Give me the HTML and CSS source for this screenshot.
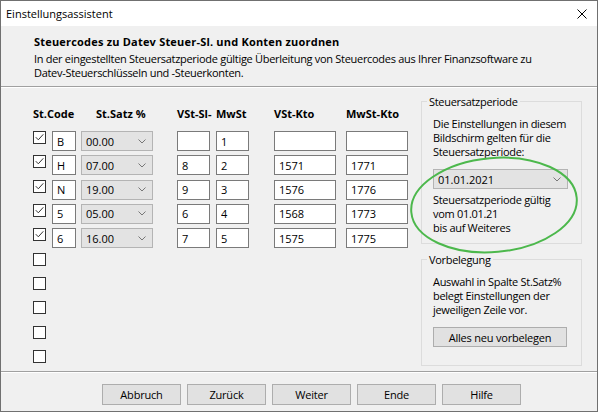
FILE: index.html
```html
<!DOCTYPE html>
<html lang="de">
<head>
<meta charset="utf-8">
<title>Einstellungsassistent</title>
<link rel="stylesheet" href="styles.css">
</head>
<body>
<div class="window">
  <div class="titlebar">
    <span class="title">Einstellungsassistent</span>
    <svg class="close" width="10" height="10" viewBox="0 0 10 10"><path d="M0.5 0.5 L9.5 9.5 M9.5 0.5 L0.5 9.5" stroke="#000" stroke-width="1" fill="none"/></svg>
  </div>
  <div class="header">
    <div class="h1">Steuercodes zu Datev Steuer-Sl. und Konten zuordnen</div>
    <div class="desc">In der eingestellten Steuersatzperiode gültige Überleitung von Steuercodes aus Ihrer Finanzsoftware zu<br>Datev-Steuerschlüsseln und -Steuerkonten.</div>
  </div>
  <div class="sep"></div>
  <div class="main">
    <div class="table">
      <div class="thead">
        <span class="th">St.Code</span>
        <span></span>
        <span class="th satz">St.Satz %</span>
        <span class="th">VSt-Sl-</span>
        <span class="th">MwSt</span>
        <span class="th">VSt-Kto</span>
        <span class="th">MwSt-Kto</span>
      </div>
      <div class="rows">
        <div class="row">
          <span class="cb"><svg width="11" height="11" viewBox="0 0 11 11"><path d="M1.8 5.2 L4.3 7.8 L9.3 2.3" stroke="#333" stroke-width="1" fill="none"/></svg></span>
          <input class="in w24" type="text" value="B">
          <span class="sel"><span>00.00</span><svg width="8" height="5" viewBox="0 0 8 5"><path d="M0.5 0.5 L4 4 L7.5 0.5" stroke="#777" stroke-width="1" fill="none"/></svg></span>
          <input class="in w33" type="text" value="">
          <input class="in w33" type="text" value="1">
          <input class="in w62" type="text" value="">
          <input class="in w62" type="text" value="">
        </div>
        <div class="row">
          <span class="cb"><svg width="11" height="11" viewBox="0 0 11 11"><path d="M1.8 5.2 L4.3 7.8 L9.3 2.3" stroke="#333" stroke-width="1" fill="none"/></svg></span>
          <input class="in w24" type="text" value="H">
          <span class="sel"><span>07.00</span><svg width="8" height="5" viewBox="0 0 8 5"><path d="M0.5 0.5 L4 4 L7.5 0.5" stroke="#777" stroke-width="1" fill="none"/></svg></span>
          <input class="in w33" type="text" value="8">
          <input class="in w33" type="text" value="2">
          <input class="in w62" type="text" value="1571">
          <input class="in w62" type="text" value="1771">
        </div>
        <div class="row">
          <span class="cb"><svg width="11" height="11" viewBox="0 0 11 11"><path d="M1.8 5.2 L4.3 7.8 L9.3 2.3" stroke="#333" stroke-width="1" fill="none"/></svg></span>
          <input class="in w24" type="text" value="N">
          <span class="sel"><span>19.00</span><svg width="8" height="5" viewBox="0 0 8 5"><path d="M0.5 0.5 L4 4 L7.5 0.5" stroke="#777" stroke-width="1" fill="none"/></svg></span>
          <input class="in w33" type="text" value="9">
          <input class="in w33" type="text" value="3">
          <input class="in w62" type="text" value="1576">
          <input class="in w62" type="text" value="1776">
        </div>
        <div class="row">
          <span class="cb"><svg width="11" height="11" viewBox="0 0 11 11"><path d="M1.8 5.2 L4.3 7.8 L9.3 2.3" stroke="#333" stroke-width="1" fill="none"/></svg></span>
          <input class="in w24" type="text" value="5">
          <span class="sel"><span>05.00</span><svg width="8" height="5" viewBox="0 0 8 5"><path d="M0.5 0.5 L4 4 L7.5 0.5" stroke="#777" stroke-width="1" fill="none"/></svg></span>
          <input class="in w33" type="text" value="6">
          <input class="in w33" type="text" value="4">
          <input class="in w62" type="text" value="1568">
          <input class="in w62" type="text" value="1773">
        </div>
        <div class="row">
          <span class="cb"><svg width="11" height="11" viewBox="0 0 11 11"><path d="M1.8 5.2 L4.3 7.8 L9.3 2.3" stroke="#333" stroke-width="1" fill="none"/></svg></span>
          <input class="in w24" type="text" value="6">
          <span class="sel"><span>16.00</span><svg width="8" height="5" viewBox="0 0 8 5"><path d="M0.5 0.5 L4 4 L7.5 0.5" stroke="#777" stroke-width="1" fill="none"/></svg></span>
          <input class="in w33" type="text" value="7">
          <input class="in w33" type="text" value="5">
          <input class="in w62" type="text" value="1575">
          <input class="in w62" type="text" value="1775">
        </div>
        <div class="row"><span class="cb"></span></div>
        <div class="row"><span class="cb"></span></div>
        <div class="row"><span class="cb"></span></div>
        <div class="row"><span class="cb"></span></div>
        <div class="row"><span class="cb"></span></div>
      </div>
    </div>
    <div class="side">
      <fieldset class="group">
        <legend>Steuersatzperiode</legend>
        <p>Die Einstellungen in diesem<br>Bildschirm gelten für die<br>Steuersatzperiode:</p>
        <span class="sel wide"><span>01.01.2021</span><svg width="8" height="5" viewBox="0 0 8 5"><path d="M0.5 0.5 L4 4 L7.5 0.5" stroke="#777" stroke-width="1" fill="none"/></svg></span>
        <p class="note">Steuersatzperiode gültig<br>vom 01.01.21<br>bis auf Weiteres</p>
      </fieldset>
      <fieldset class="group group2">
        <legend>Vorbelegung</legend>
        <p>Auswahl in Spalte St.Satz%<br>belegt Einstellungen der<br>jeweiligen Zeile vor.</p>
        <button class="btn wide-btn" type="button">Alles neu vorbelegen</button>
      </fieldset>
    </div>
  </div>
  <div class="sep"></div>
  <div class="buttons">
    <button class="btn" type="button">Abbruch</button>
    <button class="btn" type="button">Zurück</button>
    <button class="btn" type="button">Weiter</button>
    <button class="btn" type="button">Ende</button>
    <button class="btn" type="button">Hilfe</button>
  </div>
  <svg class="ellipse" width="180" height="114" viewBox="0 0 180 114"><ellipse cx="89" cy="56" rx="83" ry="47" transform="rotate(-5 89 56)" fill="none" stroke="#4cb84c" stroke-width="2"/></svg>
</div>
</body>
</html>
```

FILE: styles.css
```css
* { box-sizing: border-box; }
html, body { margin: 0; padding: 0; }
body {
  width: 598px;
  height: 412px;
  overflow: hidden;
  background: #f0f0f0;
  font-family: "Open Sans", "Segoe UI", sans-serif;
  font-size: 11px;
  letter-spacing: -0.3px;
  color: #000;
}
.window {
  position: relative;
  width: 598px;
  height: 412px;
  border: 1px solid #707070;
  background: #f0f0f0;
}
.titlebar {
  height: 25px;
  background: #fff;
  display: flex;
  align-items: center;
  padding-left: 5px;
}
.title { flex: 1; line-height: 15px; letter-spacing: 0; }
.close { margin-right: 10px; display: block; }

.header { padding: 8px 0 6px 33px; }
.h1 { font-weight: 700; line-height: 15px; letter-spacing: 0.2px; }
.desc { margin-top: 3px; line-height: 14px; }

.sep {
  height: 2px;
  border-top: 1px solid #a0a0a0;
  border-bottom: 1px solid #fff;
}

.main {
  height: 283px;
  display: flex;
  padding: 0 15px 0 32px;
}
.table { flex: none; }
.thead, .row {
  display: grid;
  grid-template-columns: 19px 29px 96px 39px 58px 72px 62px;
}
.thead { padding-top: 18px; margin-bottom: 10px; line-height: 15px; }
.th { font-weight: 700; white-space: nowrap; letter-spacing: 0; }
.th.satz { margin-left: 15px; }
.rows { display: flex; flex-direction: column; gap: 4.33px; }
.row { height: 20px; align-items: start; }

.cb {
  display: block;
  width: 13px;
  height: 13px;
  border: 1px solid #333;
  background: #fff;
}
.cb svg { display: block; }

.in {
  display: block;
  height: 20px;
  margin: 0;
  padding: 0 4px;
  border: 1px solid #7a7a7a;
  background: #fff;
  font: inherit;
  letter-spacing: 0;
  color: #000;
  outline: none;
}
.w24 { width: 24px; }
.w33 { width: 33px; }
.w62 { width: 62px; }

.sel {
  width: 72px;
  height: 20px;
  border: 1px solid #b4b4b4;
  background: #e3e3e3;
  display: flex;
  align-items: center;
  justify-content: space-between;
  padding: 0 6px 0 4px;
  letter-spacing: 0;
}
.sel svg { display: block; }

.side { width: 161px; margin-left: auto; padding-top: 6px; }
.group {
  margin: 0;
  padding: 8px 11px 8px;
  border: 1px solid #dcdcdc;
  min-width: 0;
}
.group legend {
  padding: 0 2px;
  margin-left: -6px;
  line-height: 15px;
}
.group p { margin: 0; line-height: 14px; white-space: nowrap; }
.group .sel.wide { width: 135px; margin-top: 10px; padding-left: 4px; }
.group .note { margin-top: 4px; }
.group.group2 { margin-top: 8px; padding-bottom: 18px; }

.btn {
  width: 79px;
  height: 21px;
  margin: 0;
  padding: 0;
  border: 1px solid #adadad;
  background: #e1e1e1;
  font: inherit;
  letter-spacing: -0.2px;
  color: #000;
  line-height: 15px;
}
.group .wide-btn { display: block; width: 134px; height: 20px; margin-top: 10px; }

.buttons {
  display: flex;
  gap: 6px;
  padding: 11px 0 0 101px;
}

.ellipse {
  position: absolute;
  left: 404px;
  top: 148px;
  pointer-events: none;
}
```
